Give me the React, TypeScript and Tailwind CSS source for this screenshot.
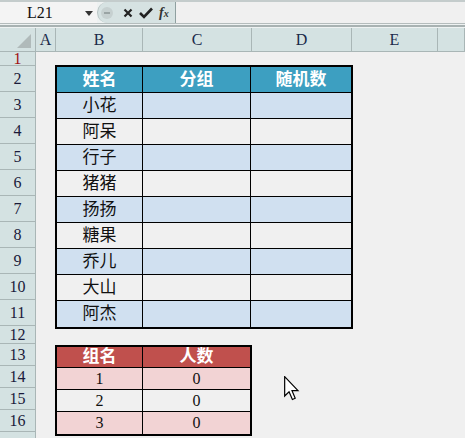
import React from 'react';

const serif = { fontFamily: '"Liberation Serif", "Times New Roman", serif' };
const cjk = { fontFamily: '"Liberation Serif", "Noto Sans CJK SC", serif' };

type RowDef = { n: number; h: string };

const rowDefs: RowDef[] = [
  { n: 1, h: 'h-[14px]' },
  { n: 2, h: 'h-[26px]' },
  { n: 3, h: 'h-[26px]' },
  { n: 4, h: 'h-[26px]' },
  { n: 5, h: 'h-[26px]' },
  { n: 6, h: 'h-[26px]' },
  { n: 7, h: 'h-[26px]' },
  { n: 8, h: 'h-[26px]' },
  { n: 9, h: 'h-[26px]' },
  { n: 10, h: 'h-[26px]' },
  { n: 11, h: 'h-[26px]' },
  { n: 12, h: 'h-[18px]' },
  { n: 13, h: 'h-[22px]' },
  { n: 14, h: 'h-[22px]' },
  { n: 15, h: 'h-[22px]' },
  { n: 16, h: 'h-[22px]' },
];

const names = ['小花', '阿呆', '行子', '猪猪', '扬扬', '糖果', '乔儿', '大山', '阿杰'];
const groups = ['1', '2', '3'];

const FormulaBar: React.FC = () => (
  <div className="h-[28px] bg-[#eef2f2] flex flex-col">
    <div className="h-[2px] bg-[#c4cccc]" />
    <div className="h-[22px] flex border-b border-[#b4bcbc]">
      <div className="w-[97px] bg-[#f4f4f4] flex items-center relative">
        <span className="ml-[27px] text-[16px] text-[#111]" style={serif}>L21</span>
        <span className="absolute left-[85px] top-[9px] w-0 h-0 border-l-[4px] border-r-[4px] border-t-[5px] border-l-transparent border-r-transparent border-t-[#333]" />
      </div>
      <div className="w-[78px] bg-[#d6e2e2] rounded-l-[11px] border-l border-[#b8c4c4] flex items-center">
        <div className="w-[12px] h-[12px] rounded-full bg-[#c6d0d0] ml-[3px] flex items-center justify-center">
          <div className="w-[6px] h-[2px] bg-[#9aa4a4]" />
        </div>
        <svg width="10" height="10" viewBox="0 0 10 10" className="ml-[10px]">
          <path d="M1.5 1.5 L8.5 8.5 M8.5 1.5 L1.5 8.5" stroke="#222" strokeWidth="2.2" />
        </svg>
        <svg width="14" height="12" viewBox="0 0 14 12" className="ml-[6px]">
          <path d="M1 6 L5 10 L13 1.5" stroke="#222" strokeWidth="2.6" fill="none" />
        </svg>
        <span className="ml-[6px] text-[14px] italic font-bold text-[#333] leading-none" style={serif}>
          f<span className="text-[10px]">x</span>
        </span>
      </div>
      <div className="flex-1 bg-[#f0f0f0] border-l border-[#8fa0a0]" />
    </div>
    <div className="h-[1px] bg-[#eef2f2]" />
    <div className="h-[2px] bg-[#a8b2b2]" />
  </div>
);

const ColHeader: React.FC = () => {
  const cols = [
    { l: 'A', w: 'w-[20px]' },
    { l: 'B', w: 'w-[87px]' },
    { l: 'C', w: 'w-[109px]' },
    { l: 'D', w: 'w-[100px]' },
    { l: 'E', w: 'w-[86px]' },
    { l: '', w: 'flex-1' },
  ];
  return (
    <div className="h-[24px] flex bg-[#d4e2e2] border-b border-[#a9b6b6]" style={serif}>
      <div className="w-[36px] border-r border-[#a9b6b6] relative">
        <div className="absolute right-[4px] bottom-[3px] w-0 h-0 border-b-[14px] border-l-[14px] border-b-[#b0baba] border-l-transparent" />
      </div>
      {cols.map((c, i) => (
        <div
          key={i}
          className={`${c.w} border-r border-[#a9b6b6] flex items-center justify-center text-[16px] text-[#1a2a4a]`}
        >
          {c.l}
        </div>
      ))}
    </div>
  );
};

const RowHeaders: React.FC = () => (
  <div className="w-[36px] bg-[#d4e2e2] border-r border-[#a9b6b6] flex flex-col" style={serif}>
    {rowDefs.map(r => (
      <div
        key={r.n}
        className={`${r.h} shrink-0 border-b border-[#a9b6b6] flex items-center justify-center text-[16px] ${
          r.n === 1 ? 'text-[#a01010] leading-none' : 'text-[#1a1a3a]'
        }`}
      >
        {r.n}
      </div>
    ))}
    <div className="h-[22px] shrink-0" />
  </div>
);

const NameTable: React.FC = () => (
  <div className="w-[298px] border-2 border-black flex flex-col" style={cjk}>
    <div className="h-[26px] flex bg-[#3d9fc1] border-b border-black text-white font-bold text-[17px]">
      <div className="w-[86px] border-r border-black flex items-center justify-center">姓名</div>
      <div className="w-[108px] border-r border-black flex items-center justify-center">分组</div>
      <div className="flex-1 flex items-center justify-center">随机数</div>
    </div>
    {names.map((n, i) => (
      <div
        key={n}
        className={`h-[26px] flex text-[17px] text-[#111] ${i % 2 === 0 ? 'bg-[#d0e0f0]' : 'bg-[#f0f0f0]'} ${
          i < names.length - 1 ? 'border-b border-black' : ''
        }`}
      >
        <div className="w-[86px] border-r border-black flex items-center justify-center">{n}</div>
        <div className="w-[108px] border-r border-black" />
        <div className="flex-1" />
      </div>
    ))}
  </div>
);

const GroupTable: React.FC = () => (
  <div className="w-[197px] border-2 border-black flex flex-col">
    <div className="h-[21px] flex bg-[#c0504d] border-b border-black text-white font-bold text-[17px]" style={cjk}>
      <div className="w-[86px] border-r border-black flex items-center justify-center">组名</div>
      <div className="flex-1 flex items-center justify-center">人数</div>
    </div>
    {groups.map((g, i) => (
      <div
        key={g}
        className={`h-[22px] flex text-[16px] text-[#111] ${i % 2 === 0 ? 'bg-[#f2d3d4]' : 'bg-[#f0f0f0]'} ${
          i < groups.length - 1 ? 'border-b border-black' : ''
        }`}
        style={serif}
      >
        <div className="w-[86px] border-r border-black flex items-center justify-center">{g}</div>
        <div className="flex-1 flex items-center justify-center">0</div>
      </div>
    ))}
  </div>
);

const App: React.FC = () => {
  return (
    <div className="w-[465px] h-[438px] overflow-hidden bg-[#f0f0f0] flex flex-col">
      <FormulaBar />
      <ColHeader />
      <div className="flex flex-1 min-h-0 overflow-hidden">
        <RowHeaders />
        <div className="flex-1 relative pl-[19px] pt-[13px] flex flex-col">
          <NameTable />
          <div className="mt-[16px]">
            <GroupTable />
          </div>
          <svg
            width="16"
            height="26"
            viewBox="0 0 12 19.5"
            className="absolute left-[248px] top-[324px]"
          >
            <path
              d="M0.5 0.5 L0.5 15 L3.8 11.8 L6.3 17.6 L8.4 16.7 L6 11 L10.5 11 Z"
              fill="#fff"
              stroke="#000"
              strokeWidth="0.9"
              strokeLinejoin="miter"
            />
          </svg>
        </div>
      </div>
    </div>
  );
};

export default App;
